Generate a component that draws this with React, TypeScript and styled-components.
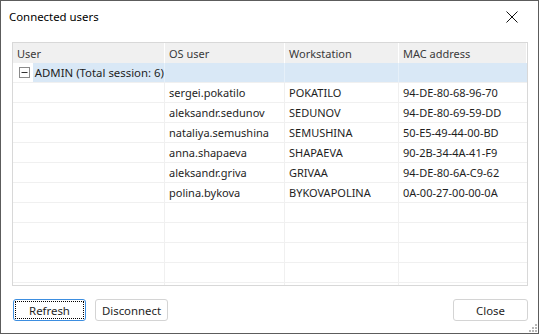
import React from "react";
import styled, { createGlobalStyle } from "styled-components";

const GlobalStyle = createGlobalStyle`
  html, body {
    margin: 0;
    padding: 0;
    background: #ffffff;
  }
  body {
    font-family: "Noto Sans", "Open Sans", sans-serif;
  }
`;

const Window = styled.div`
  box-sizing: border-box;
  width: 539px;
  height: 334px;
  border: 1px solid #5c5c5c;
  background: #ffffff;
  display: flex;
  flex-direction: column;
  position: relative;
  color: #1e1e1e;
`;

const TitleBar = styled.div`
  height: 31px;
  display: flex;
  align-items: center;
  justify-content: space-between;
  padding: 0 20px 0 8px;
  font-size: 11.4px;
  color: #000;
`;

const CloseIcon = styled.svg`
  width: 12px;
  height: 12px;
`;

const Body = styled.div`
  padding: 10px 10px 0 11px;
`;

const Grid = styled.div`
  box-sizing: border-box;
  height: 244px;
  border: 1px solid #d8d8d8;
  overflow: hidden;
  display: grid;
  grid-template-columns: 152px 120px 114px 1fr;
  grid-auto-rows: 20px;
  font-size: 11px;
`;

const HeadCell = styled.div`
  box-sizing: border-box;
  background: #f0f0f0;
  color: #3a3a3a;
  border-right: 1px solid #ffffff;
  padding-left: 4px;
  display: flex;
  align-items: center;
  &:last-child {
    border-right: none;
  }
`;

const Cell = styled.div<{ $selected?: boolean; $last?: boolean }>`
  box-sizing: border-box;
  background: ${(p) => (p.$selected ? "#d9e8f6" : "#ffffff")};
  border-right: ${(p) =>
    p.$last ? "none" : p.$selected ? "1px solid #e6f0f9" : "1px solid #f0f0f0"};
  border-bottom: 1px solid #f0f0f0;
  padding-left: 4px;
  display: flex;
  align-items: center;
  white-space: nowrap;
  overflow: hidden;
`;

const GroupCell = styled.div`
  box-sizing: border-box;
  border-right: 1px solid #e6f0f9;
  border-bottom: 1px solid #f0f0f0;
  display: flex;
  align-items: stretch;
  white-space: nowrap;
`;

const Expander = styled.div`
  width: 19px;
  display: flex;
  align-items: center;
  justify-content: center;
  padding-left: 3px;
  svg {
    width: 11px;
    height: 11px;
  }
`;

const GroupLabel = styled.div`
  flex: 1;
  background: #d9e8f6;
  display: flex;
  align-items: center;
  padding-left: 2px;
  font-size: 11.4px;
`;

const Footer = styled.div`
  display: flex;
  align-items: center;
  gap: 9px;
  padding: 13px 10px 0 12px;
`;

const Button = styled.button<{ $focused?: boolean; $push?: boolean }>`
  box-sizing: border-box;
  height: 22px;
  width: ${(p) => (p.$push ? "75px" : "73px")};
  margin-left: ${(p) => (p.$push ? "auto" : "0")};
  font-family: inherit;
  font-size: 11.4px;
  color: #1e1e1e;
  background: #ffffff;
  border: 1px solid ${(p) => (p.$focused ? "#3d8ee0" : "#d4d4d4")};
  border-radius: 3px;
  padding: 0;
  position: relative;
  &::after {
    content: "";
    display: ${(p) => (p.$focused ? "block" : "none")};
    position: absolute;
    inset: 1px;
    border: 1px dotted #000;
  }
`;

const Grip = styled.svg`
  position: absolute;
  right: 1px;
  bottom: 1px;
  width: 10px;
  height: 10px;
`;

type Session = {
  os: string;
  station: string;
  mac: string;
};

const sessions: Session[] = [
  { os: "sergei.pokatilo", station: "POKATILO", mac: "94-DE-80-68-96-70" },
  { os: "aleksandr.sedunov", station: "SEDUNOV", mac: "94-DE-80-69-59-DD" },
  { os: "nataliya.semushina", station: "SEMUSHINA", mac: "50-E5-49-44-00-BD" },
  { os: "anna.shapaeva", station: "SHAPAEVA", mac: "90-2B-34-4A-41-F9" },
  { os: "aleksandr.griva", station: "GRIVAA", mac: "94-DE-80-6A-C9-62" },
  { os: "polina.bykova", station: "BYKOVAPOLINA", mac: "0A-00-27-00-00-0A" },
];

const emptyRows = 5;

const App = () => {
  return (
    <>
      <GlobalStyle />
      <Window>
        <TitleBar>
          <span>Connected users</span>
          <CloseIcon viewBox="0 0 12 12">
            <path d="M0.5 0.5 L11.5 11.5 M11.5 0.5 L0.5 11.5" stroke="#111" strokeWidth="1" fill="none" />
          </CloseIcon>
        </TitleBar>
        <Body>
          <Grid>
            <HeadCell>User</HeadCell>
            <HeadCell>OS user</HeadCell>
            <HeadCell>Workstation</HeadCell>
            <HeadCell>MAC address</HeadCell>

            <GroupCell>
              <Expander>
                <svg viewBox="0 0 11 11">
                  <rect x="0.5" y="0.5" width="10" height="10" fill="#fff" stroke="#8a8a8a" />
                  <path d="M2.5 5.5 H8.5" stroke="#333" />
                </svg>
              </Expander>
              <GroupLabel>ADMIN (Total session: 6)</GroupLabel>
            </GroupCell>
            <Cell $selected />
            <Cell $selected />
            <Cell $selected $last />

            {sessions.map((s) => (
              <React.Fragment key={s.os}>
                <Cell />
                <Cell>{s.os}</Cell>
                <Cell>{s.station}</Cell>
                <Cell $last>{s.mac}</Cell>
              </React.Fragment>
            ))}

            {Array.from({ length: emptyRows }).map((_, i) => (
              <React.Fragment key={i}>
                <Cell />
                <Cell />
                <Cell />
                <Cell $last />
              </React.Fragment>
            ))}
          </Grid>
        </Body>
        <Footer>
          <Button $focused>Refresh</Button>
          <Button>Disconnect</Button>
          <Button $push>Close</Button>
        </Footer>
        <Grip viewBox="0 0 10 10">
          <rect x="8" y="2" width="2" height="2" fill="#b8b8b8" />
          <rect x="5" y="5" width="2" height="2" fill="#b8b8b8" />
          <rect x="8" y="5" width="2" height="2" fill="#b8b8b8" />
          <rect x="2" y="8" width="2" height="2" fill="#b8b8b8" />
          <rect x="5" y="8" width="2" height="2" fill="#b8b8b8" />
          <rect x="8" y="8" width="2" height="2" fill="#b8b8b8" />
        </Grip>
      </Window>
    </>
  );
};

export default App;
